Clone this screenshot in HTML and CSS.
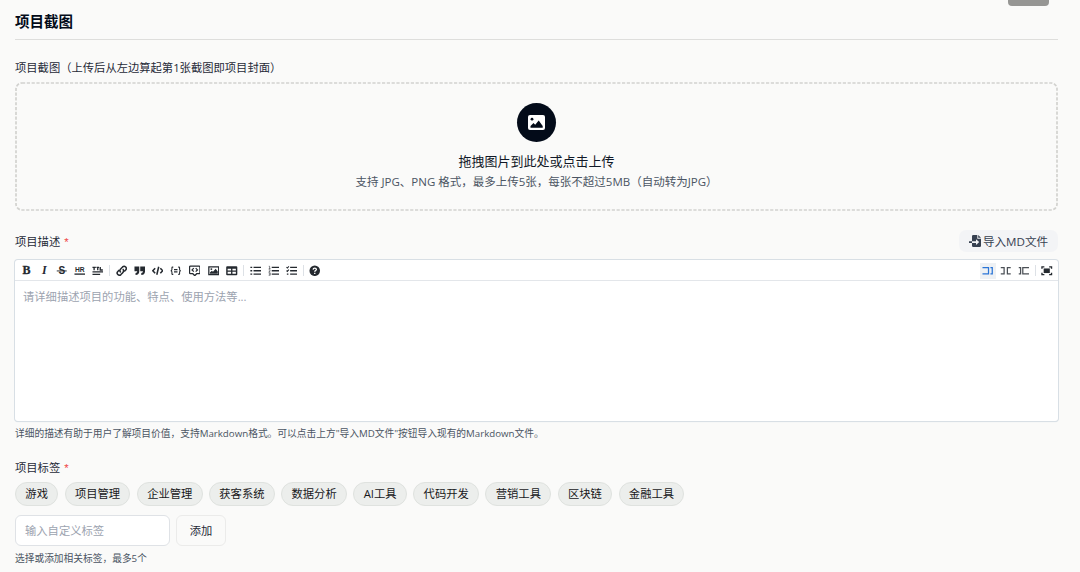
FILE: index.html
```html
<!DOCTYPE html>
<html lang="zh-CN">
<head>
<meta charset="utf-8">
<title>项目截图</title>
<link rel="stylesheet" href="styles.css">
</head>
<body>
<div class="top-control"></div>
<main class="form">
  <h2 class="section-title">项目截图</h2>
  <div class="label shot-label">项目截图（上传后从左边算起第1张截图即项目封面）</div>
  <section class="dropzone">
    <svg class="drop-outline"><rect x="1" y="1" width="1041" height="127" rx="6"/></svg>
    <div class="drop-icon"><svg width="17" height="15" viewBox="0 0 17 15"><rect width="17" height="15" rx="2" fill="#fff"/><circle cx="4" cy="4.2" r="1.4" fill="#030b19"/><path d="M2.500 12.700v-1.600l3-3 1.700 1.600 3.500-4.200 4 5.500v1.700z" fill="#030b19"/></svg></div>
    <div class="drop-title">拖拽图片到此处或点击上传</div>
    <div class="drop-hint">支持 JPG、PNG 格式，最多上传5张，每张不超过5MB（自动转为JPG）</div>
  </section>
  <div class="desc-head">
    <div class="label">项目描述<span class="required">*</span></div>
    <button class="import"><svg width="13" height="12" viewBox="0 0 13 12"><path d="M3 1.200Q3 0 4.200 0H8.300v3.700H12v7.100Q12 12 10.800 12H4.200Q3 12 3 10.800V8h4v2l3.200-2.900L7 4.200v2H3zM9.200 0L12 2.800H9.200zM0 6.200h3V8H0z" fill="#374151"/></svg>导入MD文件</button>
  </div>
  <section class="editor">
    <div class="toolbar">
      <div class="tools">
        <span class="tool bold">B</span>
        <span class="tool italic">I</span>
        <span class="tool"><svg viewBox="0 0 12 12"><text class="strike-s" x="6" y="9.700" text-anchor="middle">S</text><path d="M.8 6.200h10.400" class="strike"/></svg></span>
        <span class="tool"><svg viewBox="0 0 12 12"><text class="tiny" x="6" y="7" text-anchor="middle" textLength="10">HR</text><path d="M.5 9.500h11" class="line"/></svg></span>
        <span class="tool"><svg viewBox="0 0 12 12"><path d="M.5 2.500h3.500M2.200 2.500v3M4.700 2.500h2.600M6 2.500v3M8.600 2v3.200h2.700M.5 7.200h11M.5 9.800h8" class="line"/></svg></span>
        <i class="divider"></i>
        <span class="tool"><svg viewBox="0 0 12 12"><path d="M5 7.600C3.600 6.500 4 5 5 4l1.900-2c1-1 2.300-.8 3.200.1s.9 2.200 0 3.100L8.600 6.700M7 4.400c1.400 1.100 1 2.600 0 3.600L5.100 10c-1 1-2.300.8-3.200-.1s-.9-2.200 0-3.100l1.500-1.500" class="link"/></svg></span>
        <span class="tool"><svg viewBox="0 0 12 12"><path d="M.5 1.500h5v5c0 2.400-1.300 4-3.900 4V8.400c1.200 0 1.700-.6 1.700-1.800H.5zm6 0h5v5c0 2.400-1.300 4-3.900 4V8.400c1.200 0 1.700-.6 1.700-1.800H6.500z"/></svg></span>
        <span class="tool"><svg viewBox="0 0 12 12"><path d="M3.300 3.300L.8 6l2.500 2.700M8.700 3.300L11.200 6 8.700 8.700M7 1.800L5 10.200" class="link"/></svg></span>
        <span class="tool wide"><svg viewBox="0 0 12 12"><path d="M3.400 2.200H2.700Q2 2.200 2 2.900v1.900Q2 6 .7 6 2 6 2 7.200v1.900q0 .7.700.7h.7M8.600 2.200h.7q.7 0 .7.700v1.900Q10 6 11.300 6 10 6 10 7.200v1.900q0 .7-.7.700h-.7M4.200 4.800h3.600M4.200 7.200h3.600" class="thin"/></svg></span>
        <span class="tool wide"><svg viewBox="0 0 12 12"><path d="M1.500 1.100h9q.9 0 .9.900v6.200q0 .9-.9.900H8L6 11.200 4 9.100H1.500q-.9 0-.9-.9V2q0-.9.900-.9z" class="bubble"/><path d="M5 3.300L3.200 5.100 5 6.900M7 3.300l1.800 1.800L7 6.900" class="bubble"/></svg></span>
        <span class="tool wide"><svg viewBox="0 0 12 12"><path d="M.2 1.300h11.600v9.400H.2z M1.500 2.600v6.800h9V2.600z" fill-rule="evenodd"/><circle cx="3.500" cy="4.300" r="1"/><path d="M2 9V7.800l2-1.700 1.200 1L8 4l2.200 2.700V9z"/></svg></span>
        <span class="tool"><svg viewBox="0 0 12 12"><path fill-rule="evenodd" d="M1.200 1.300h9.600q1 0 1 1v7.400q0 1-1 1H1.200q-1 0-1-1V2.300q0-1 1-1zM1.700 4v1.700h3.600V4zm5 0v1.700h3.600V4zM1.700 7.100V9h3.600V7.100zm5 0V9h3.600V7.100z"/></svg></span>
        <i class="divider"></i>
        <span class="tool"><svg viewBox="0 0 12 12"><path d="M.4 2.500h1.900M.4 6h1.900M.4 9.500h1.900M3.700 2.500h8M3.700 6h8M3.700 9.500h8" class="line"/></svg></span>
        <span class="tool"><svg viewBox="0 0 12 12"><path d="M3.900 2.500h7.800M3.900 6h7.800M3.900 9.500h7.800" class="line"/><path d="M.8 1.300h.9v2.400M.8 3.700h1.800M.7 5h1.500v1L.8 7.200h1.700M.7 8.300h1.600v2.400H.7M1 9.500h1.300" class="hair"/></svg></span>
        <span class="tool"><svg viewBox="0 0 12 12"><path d="M4.300 2.500h7.400M4.300 6h7.400M4.300 9.500h7.400M.9 9.500h1.600" class="line"/><path d="M.5 2.300l.9.900L3 1.400M.5 5.800l.9.900L3 4.900" class="thin"/></svg></span>
        <i class="divider"></i>
        <span class="tool"><svg viewBox="0 0 12 12"><circle cx="6" cy="6" r="5.500"/><path d="M4.300 4.800c.1-2 3.400-2 3.400-.2C7.700 5.700 6 5.700 6 7M6 8.100v1.300" class="question"/></svg></span>
      </div>
      <div class="modes">
        <span class="tool mode active"><svg viewBox="0 0 12 12"><path d="M.5 2.800h6.300v6.400H.5M8.800 2.800h1.900v6.400H8.800" class="pane"/></svg></span>
        <span class="tool mode"><svg viewBox="0 0 12 12"><path d="M.8 2.800h3.500v6.400H.8M11.200 2.800H7.700v6.400h3.500" class="pane"/></svg></span>
        <span class="tool mode"><svg viewBox="0 0 12 12"><path d="M.8 2.800h1.900v6.400H.8M11.500 2.800H5v6.400h6.500" class="pane"/></svg></span>
        <i class="divider"></i>
        <span class="tool"><svg viewBox="0 0 12 12"><path d="M1 4V1.900h2.500M8.500 1.900H11V4M1 8v2.100h2.500M8.500 10.100H11V8" class="line"/><path d="M2.800 3.600h6.400v4.800H2.800z"/></svg></span>
      </div>
    </div>
    <div class="placeholder">请详细描述项目的功能、特点、使用方法等...</div>
  </section>
  <div class="help desc-help">详细的描述有助于用户了解项目价值，支持Markdown格式。可以点击上方"导入MD文件"按钮导入现有的Markdown文件。</div>
  <div class="label tag-label">项目标签<span class="required">*</span></div>
  <div class="tags">
    <span class="tag">游戏</span><span class="tag">项目管理</span><span class="tag">企业管理</span><span class="tag">获客系统</span><span class="tag">数据分析</span><span class="tag">AI工具</span><span class="tag">代码开发</span><span class="tag">营销工具</span><span class="tag">区块链</span><span class="tag">金融工具</span>
  </div>
  <div class="add-row">
    <div class="tag-input">输入自定义标签</div>
    <button class="add">添加</button>
  </div>
  <div class="help">选择或添加相关标签，最多5个</div>
</main>
</body>
</html>
```
FILE: styles.css
```css
* { box-sizing: border-box; }
body {
  margin: 0;
  height: 572px;
  overflow: hidden;
  background: #fafaf9;
  color: #1f2937;
  font-family: "Open Sans", "Noto Sans CJK SC", sans-serif;
  font-size: 11.3px;
}
button { font: inherit; margin: 0; padding: 0; }
.top-control {
  position: absolute;
  top: 0;
  left: 1008px;
  width: 41px;
  height: 6px;
  background: #969694;
  border-radius: 0 0 4px 4px;
}
.form { padding: 0 22px 0 15px; }
.section-title {
  margin: 0;
  height: 40px;
  padding-top: 11px;
  border-bottom: 1px solid #dededc;
  color: #030b19;
  font-size: 14.5px;
  line-height: 21px;
  font-weight: 700;
}
.label { line-height: 16px; white-space: nowrap; }
.shot-label { margin-top: 20px; height: 22px; }
.required {
  color: #ef4444;
  margin-left: 4px;
  font-family: "Liberation Sans", sans-serif;
}
.dropzone {
  position: relative;
  height: 129px;
  padding-top: 20.5px;
  display: flex;
  flex-direction: column;
  align-items: center;
}
.drop-outline {
  position: absolute;
  inset: 0;
  width: 100%;
  height: 100%;
  fill: none;
  stroke: #d2d2cf;
  stroke-width: 1.7;
  stroke-dasharray: 3.2 1.6;
}
.drop-icon {
  width: 39px;
  height: 39px;
  border-radius: 50%;
  background: #030b19;
  display: flex;
  align-items: center;
  justify-content: center;
}
.drop-title { margin-top: 10px; font-size: 13px; line-height: 19px; color: #111827; }
.drop-hint { margin-top: 2.500px; font-size: 11.5px; line-height: 17px; color: #4b5563; white-space: nowrap; }
.desc-head {
  margin-top: 19px;
  height: 22px;
  display: flex;
  align-items: center;
  justify-content: space-between;
}
.desc-head .label { padding-top: 2px; }
.import {
  width: 99px;
  height: 22px;
  border: 0;
  border-radius: 7px;
  background: #f3f4f6;
  color: #374151;
  font-size: 11.6px;
  display: flex;
  align-items: center;
  justify-content: center;
  gap: 1px;
  white-space: nowrap;
}
.editor {
  height: 161px;
  margin-top: 8px;
  border-radius: 3px;
  background: #fff;
  box-shadow: 0 0 0 1px #d8dfe5, 0 1px 1px #d8dfe5;
}
.toolbar {
  height: 21px;
  padding: 1px 2px 0 2.500px;
  border-bottom: 1px solid #e3e6ea;
  display: flex;
  justify-content: space-between;
  align-items: center;
}
.tools, .modes { display: flex; align-items: center; }
.tool {
  width: 17.900px;
  height: 16px;
  display: flex;
  align-items: center;
  justify-content: center;
  color: #24292f;
}
.tool.wide { width: 18.900px; }
.tool svg { width: 11.500px; height: 11.500px; fill: currentColor; }
.bold { font: bold 12px "Liberation Serif", serif; -webkit-text-stroke: .3px #24292f; }
.italic { font: italic bold 12px "Liberation Serif", serif; }
.strike-s { font: bold 10.500px "Liberation Sans", sans-serif; }
.tiny { font: bold 7px "Liberation Sans", sans-serif; }
.tool .strike { fill: none; stroke: currentColor; stroke-width: 1; }
.tool .line { fill: none; stroke: currentColor; stroke-width: 1.4; }
.tool .link { fill: none; stroke: currentColor; stroke-width: 1.6; }
.tool .thin { fill: none; stroke: currentColor; stroke-width: 1.1; }
.tool .bubble { fill: none; stroke: currentColor; stroke-width: 1.300; }
.tool .hair { fill: none; stroke: currentColor; stroke-width: .6; }
.tool .pane { fill: none; stroke: currentColor; stroke-width: 1.300; }
.tool .question { fill: none; stroke: #fff; stroke-width: 1.4; }
.divider { width: 1px; height: 11px; margin: 0 2.400px; background: #dde1e6; }
.modes .divider { margin-left: 1px; }
.mode { width: 16px; margin-right: 2px; color: #4b5056; }
.active { background: #eef1f4; color: #2b75d6; }
.placeholder { padding: 7px 8px; line-height: 17px; color: #9ca3af; }
.help { font-size: 9.730px; line-height: 14px; color: #4b5563; white-space: nowrap; }
.desc-help { margin-top: 6px; }
.tag-label { margin-top: 19px; }
.tags { margin-top: 6px; display: flex; gap: 6.300px; }
.tag {
  height: 24px;
  padding: 0 9.350px;
  border: 1px solid #dfe2df;
  border-radius: 12px;
  background: #eceeec;
  color: #18181b;
  line-height: 22px;
  white-space: nowrap;
}
.add-row { margin-top: 9px; display: flex; gap: 6px; }
.tag-input {
  width: 155px;
  height: 31px;
  padding: 0 9px;
  border: 1px solid #dfe2e6;
  border-radius: 6px;
  background: #fff;
  color: #9ca3af;
  line-height: 29px;
}
.add {
  width: 50px;
  height: 31px;
  padding-bottom: 1px;
  border: 1px solid #ebebea;
  border-radius: 6px;
  background: #fafaf9;
  color: #1f2937;
}
.add-row + .help { margin-top: 6px; }
```
